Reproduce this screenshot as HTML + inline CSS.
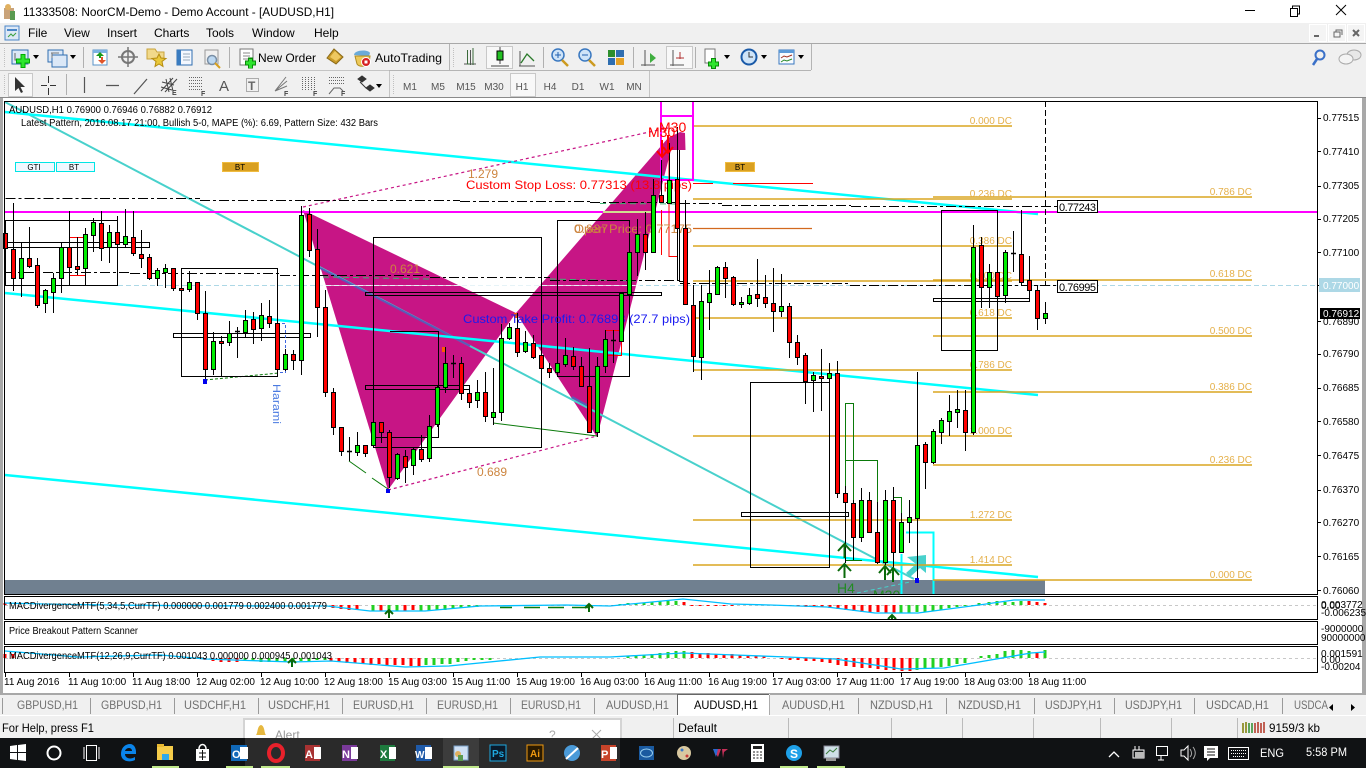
<!DOCTYPE html>
<html><head><meta charset="utf-8"><title>MT4</title>
<style>
html,body{margin:0;padding:0;background:#fff;width:1366px;height:768px;overflow:hidden}
svg{display:block;font-family:"Liberation Sans",sans-serif}
</style></head><body>
<svg width="1366" height="768" viewBox="0 0 1366 768" xmlns="http://www.w3.org/2000/svg">
<rect width="1366" height="768" fill="#fff"/>
<!-- title bar -->
<path d="M4 8h10v11H4z" fill="#c9a37a"/><circle cx="8" cy="7" r="3" fill="#e0b060"/><rect x="10" y="11" width="5" height="9" fill="#5a9a50"/>
<text x="23" y="16" font-size="12" fill="#000" textLength="311" lengthAdjust="spacingAndGlyphs">11333508: NoorCM-Demo - Demo Account - [AUDUSD,H1]</text>
<path d="M1245 10.5h10" stroke="#000"/><path d="M1290.5 8.5h7v8h-7zM1292.5 8.500v-2.500h7v8h-2" fill="none" stroke="#000"/><path d="M1336 5l10 10M1346 5l-10 10" stroke="#000"/>
<!-- menu -->
<rect y="23" width="1366" height="20" fill="#f0f0f0"/>
<rect x="5" y="26" width="14" height="14" fill="#dde8f6" stroke="#4a86c8"/><path d="M7 30h10" stroke="#4a86c8" stroke-width="2"/><path d="M8 37l3-3 2 2 3-3" stroke="#3aa040" fill="none"/>
<g font-size="12" fill="#000"><text x="28" y="37">File</text><text x="64" y="37">View</text><text x="107" y="37">Insert</text><text x="154" y="37">Charts</text><text x="206" y="37">Tools</text><text x="252" y="37">Window</text><text x="314" y="37">Help</text></g>
<g fill="#f4f4f4" stroke="#fff"><rect x="1309.500" y="24.500" width="17" height="17"/><rect x="1328.500" y="24.500" width="17" height="17"/><rect x="1347.500" y="24.500" width="17" height="17"/></g>
<path d="M1314 36h5" stroke="#666" stroke-width="2"/><path d="M1334 32h6v5h-6zM1336 32v-2h6v5" fill="none" stroke="#666"/><path d="M1353 30l6 6M1359 30l-6 6" stroke="#666" stroke-width="2"/>
<!-- toolbars -->
<rect y="43" width="1366" height="55" fill="#f0f0f0"/>
<rect y="43" width="1366" height="1" fill="#a8a8a8"/>
<path d="M0 70.500h811M449.500 44v26M811.500 44v26" stroke="#b4b4b4"/>
<path d="M0 70.500h389M389.500 71v26M649.500 71v26" stroke="#c4c4c4"/>
<g stroke="#c0c0c0" stroke-dasharray="1 1"><path d="M4.500 48v19M453.500 48v19M4.500 75v19M393.500 75v19"/></g>
<g stroke="#b0b0b0"><path d="M83.500 47v21M229.500 47v21M543.500 47v21M633.500 47v21M695.500 47v21M66.500 74v21"/></g>
<!-- row 1 icons -->
<rect x="12" y="50" width="16" height="14" fill="#dbe8f7" stroke="#2f6eb0"/><path d="M15 53v7h8" stroke="#666" fill="none"/><path d="M16 61h14M23 54v14" stroke="#0a0" stroke-width="5"/><path d="M17 61h12M23 55v12" stroke="#2ee52e" stroke-width="3"/>
<path d="M33 55l3 4 3-4z" fill="#000"/>
<rect x="48" y="50" width="15" height="12" fill="#dbe8f7" stroke="#2f6eb0"/><rect x="52" y="55" width="15" height="12" fill="#dbe8f7" stroke="#2f6eb0"/><path d="M52 53v5M51 53h8" stroke="#777"/>
<path d="M70 55l3 4 3-4z" fill="#000"/>
<rect x="93" y="50" width="14" height="15" fill="#fff" stroke="#5a93c8"/><path d="M93 50h14v3H93z" fill="#7ab2e2"/><path d="M100 52l-4 4h3v2h2v-2h3z" fill="#1a9a1a"/><path d="M102 64l4-4h-3v-3h-2v3h-3z" fill="#e0552a"/>
<circle cx="128" cy="57" r="6" fill="none" stroke="#777" stroke-width="2"/><path d="M128 47v20M118 57h20" stroke="#777" stroke-width="1.500"/>
<path d="M147 49h8l2 3h7v7h-17z" fill="#f1d98a" stroke="#c9a43c"/><path d="M159 54l2 4 5 .5-4 3 1 5-4-2.500-4 2.500 1-5-4-3 5-.5z" fill="#e9c83a" stroke="#b58c10"/>
<rect x="177" y="50" width="15" height="15" fill="#f4f8ff" stroke="#2f6eb0"/><rect x="177" y="50" width="4" height="15" fill="#3a7cc0"/><path d="M183 54h7M183 57h7M183 60h7" stroke="#9ab"/>
<rect x="205" y="50" width="13" height="14" fill="#f0f0f0" stroke="#999"/><circle cx="212" cy="60" r="4.500" fill="#bcd8f2" stroke="#7a8fa5" stroke-width="1.500"/><path d="M215 63l5 5" stroke="#d8a020" stroke-width="2"/>
<rect x="240" y="49" width="13" height="16" fill="#fff" stroke="#777"/><path d="M243 53h7M243 56h7M243 59h5" stroke="#888"/><path d="M245 63h11M250.500 57.500v11" stroke="#0a8a0a" stroke-width="5"/><path d="M246 63h9M250.500 59v9" stroke="#2ee52e" stroke-width="3"/>
<text x="258" y="62" font-size="12" fill="#000" textLength="58" lengthAdjust="spacingAndGlyphs">New Order</text>
<path d="M327 58l7-9 9 8-7 7z" fill="#c89a28" stroke="#8a6a18"/><path d="M330 57l5-6 6 6-5 4z" fill="#eec860"/>
<path d="M354 55c0-5 14-6 16-2l-1 3z" fill="#6aaad8"/><path d="M355 56l15 0-1 8c-4 3-10 3-12 0z" fill="#edc95a" stroke="#b08c20"/><circle cx="366" cy="62" r="4.500" fill="#d62020" stroke="#fff"/><rect x="364.500" y="60.500" width="3" height="3" fill="#fff"/>
<text x="375" y="62" font-size="12" fill="#000" textLength="67" lengthAdjust="spacingAndGlyphs">AutoTrading</text>
<path d="M470.500 50v15M464 64h12M482 0" stroke="#555" fill="none"/><path d="M467.500 50v14h3M473 48v17" stroke="#3a6a3a" fill="none"/>
<rect x="486.500" y="46.500" width="26" height="22" fill="#f8f8f8" stroke="#c8c8c8"/><path d="M500 47v17M491 66h18" stroke="#444"/><rect x="497" y="51" width="6" height="9" fill="#22c022" stroke="#000"/>
<path d="M519 66h16M520 51v15" stroke="#555" fill="none"/><path d="M521 63l6-9 7 7" stroke="#2a7a2a" stroke-width="1.300" fill="none"/>
<circle cx="558" cy="55" r="6" fill="#cfe4f8" stroke="#3a78c0" stroke-width="1.500"/><path d="M555 55h6M558 52v6" stroke="#2060b0"/><path d="M562 60l6 6" stroke="#cc9a20" stroke-width="2.500"/>
<circle cx="585" cy="55" r="6" fill="#cfe4f8" stroke="#3a78c0" stroke-width="1.500"/><path d="M582 55h6" stroke="#2060b0"/><path d="M589 60l6 6" stroke="#cc9a20" stroke-width="2.500"/>
<rect x="608" y="50" width="7" height="7" fill="#2d8e2d"/><rect x="616" y="50" width="8" height="7" fill="#2f6eb0"/><rect x="608" y="58" width="7" height="7" fill="#2f6eb0"/><rect x="616" y="58" width="8" height="7" fill="#e5a126"/>
<path d="M645 50v16M641 65h14" stroke="#555"/><path d="M650 53l6 5-6 5z" fill="#3fae3f"/>
<rect x="666.500" y="46.500" width="26" height="22" fill="#f8f8f8" stroke="#c8c8c8"/><path d="M673 50v16M670 65h14" stroke="#555"/><path d="M680 52v7M676 58h8" stroke="#b03030"/>
<rect x="705" y="49" width="10" height="14" fill="#fff" stroke="#777"/><path d="M708 64h11M713.500 58v11" stroke="#0a8a0a" stroke-width="5"/><path d="M709 64h9M713.500 59v9" stroke="#2ee52e" stroke-width="3"/>
<path d="M724 55l3 4 3-4z" fill="#000"/>
<circle cx="749" cy="57" r="7.500" fill="#cfe4f8" stroke="#1a5aa8" stroke-width="2"/><path d="M749 52v5h4" stroke="#333" fill="none"/><path d="M761 55l3 4 3-4z" fill="#000"/>
<rect x="779" y="50" width="15" height="14" fill="#f8fbff" stroke="#3a78c0"/><rect x="779" y="50" width="15" height="3" fill="#5a9ad8"/><path d="M781 58l3-2 3 1 5-2" stroke="#a03020" fill="none"/><path d="M781 62l3-2 3 1 5-2" stroke="#2a8a2a" fill="none"/><path d="M798 55l3 4 3-4z" fill="#000"/>
<circle cx="1320" cy="55" r="4.500" fill="none" stroke="#3a70c8" stroke-width="2"/><path d="M1317 59l-4 6" stroke="#3a70c8" stroke-width="2.500"/>
<ellipse cx="1354" cy="55" rx="7" ry="5" fill="#e8e8e8" stroke="#aaa"/><ellipse cx="1346" cy="59" rx="7" ry="5" fill="#f4f4f4" stroke="#aaa"/>
<!-- row 2 icons -->
<rect x="8.500" y="73.500" width="24" height="23" fill="#f8f8f8" stroke="#c8c8c8"/><path d="M15 77l0 14 3.500-3 2.500 5 2-1-2.500-5 4.500 0z" fill="#333"/>
<path d="M48.500 76v7M48.500 88v7M41 85.500h6M50 85.500h6" stroke="#333"/>
<path d="M84.500 77v16M106 85.500h13M134 94l13-15" stroke="#555" stroke-width="1.200"/>
<g stroke="#444" fill="none"><path d="M161 91l12-13M165 92l12-13M162 82l12 3M161 87l11 3M166 79l3 13M170 78l3 13"/></g><text x="172" y="95" font-size="7" font-weight="bold" fill="#444">E</text>
<g stroke="#666" stroke-dasharray="1 1"><path d="M189 77.500h14M189 80.500h14M189 83.500h14M189 86.500h14M189 89.500h14"/></g><text x="201" y="96" font-size="7" font-weight="bold" fill="#444">F</text>
<text x="219" y="91" font-size="15" fill="#555">A</text>
<rect x="246.500" y="78.500" width="12" height="13" fill="none" stroke="#666" stroke-dasharray="1 1"/><text x="248" y="90" font-size="12" font-weight="bold" fill="#666">T</text>
<path d="M275 91l11-14M275 91l12-10M275 91l12-5" stroke="#777"/><text x="284" y="96" font-size="7" font-weight="bold" fill="#444">F</text>
<g stroke="#666" stroke-dasharray="1 1"><path d="M302.500 77v14M305.500 77v14M308.500 77v14M311.500 77v14M314.500 77v14"/></g><text x="313" y="96" font-size="7" font-weight="bold" fill="#444">F</text>
<g stroke="#666" stroke-dasharray="1 1"><path d="M329 77.500h15M329 80.500h15M329 83.500h15"/></g><path d="M329 94l5-6h6l3 3" stroke="#666" fill="none"/><text x="341" y="96" font-size="7" font-weight="bold" fill="#444">F</text>
<path d="M358 79l4-3 4 3-4 3zM366 88l4-3 4 3-4 3zM360 82l6 6" fill="#333" stroke="#333"/><path d="M376 84l3 4 3-4z" fill="#000"/>
<rect x="510.500" y="73.500" width="25" height="23" fill="#f8f8f8" stroke="#c8c8c8"/>
<g font-size="10" fill="#555" text-anchor="middle"><text x="410" y="90">M1</text><text x="438" y="90">M5</text><text x="466" y="90">M15</text><text x="494" y="90">M30</text><text x="522" y="90">H1</text><text x="550" y="90">H4</text><text x="578" y="90">D1</text><text x="607" y="90">W1</text><text x="634" y="90">MN</text></g>
<rect y="97" width="1366" height="1" fill="#8a8a8a"/>
<!-- window edges -->
<rect y="98" width="3" height="595" fill="#a8a8a8"/><rect x="1362" y="98" width="4" height="595" fill="#a8a8a8"/>
<!-- chart -->
<rect x="5" y="580" width="1040" height="14.500" fill="#708090"/>
<path d="M303 210L388 490L516 313z" fill="#c71585"/>
<path d="M516 313L597 437L671 150L685.500 150L685 133L680 132L668 138z" fill="#c71585"/>
<!-- teal / cyan lines -->
<path d="M5 102L914 579" stroke="#48d1cc" stroke-width="2" fill="none"/>
<path d="M320 268L470 346" stroke="#5a5ab8" stroke-width="2"/><path d="M572 397L590 407" stroke="#5a5ab8" stroke-width="2"/>
<g stroke="#00ffff" stroke-width="2.500" fill="none"><path d="M5 112L1038 214"/><path d="M5 293L1038 395"/><path d="M5 475L1038 577"/></g>
<path d="M901.500 594V554M906 532.500h27.500V594" stroke="#00ffff" stroke-width="2" fill="none"/>
<path d="M907 557l19-2v18l-6-5-10 9-4-4 10-9z" fill="#48d1cc"/>
<!-- dashed pattern lines -->
<path d="M303 207L668 128" stroke="#c71585" stroke-dasharray="3 3" fill="none" stroke-width="1.200"/>
<path d="M388 490L597 436" stroke="#c71585" stroke-dasharray="3 3" fill="none" stroke-width="1.200"/>
<path d="M205 380L279 373" stroke="#0a7a0a" stroke-dasharray="3 2" fill="none"/>
<path d="M349 461L366 473M372 478L388 489" stroke="#0a7a0a" fill="none"/>
<path d="M493 423L597 436" stroke="#0a7a0a" fill="none"/>
<path d="M857 593L910 582" stroke="#48d1cc" stroke-dasharray="4 3" fill="none"/>
<!-- horizontal fib levels -->
<g stroke="#daa520" stroke-width="1.500"><path d="M693 126H1012M693 199H1012M693 246H1012M693 281H1012M693 318H1012M693 370H1012M693 436H1012M693 520H1012M693 565H1012"/><path d="M933 197H1252M933 280H1252M933 336H1252M933 392H1252M933 465H1252M933 580H1252"/></g>
<path d="M693 183.500H713M733 183.500H813" stroke="#f00"/>
<path d="M693 228.500H812" stroke="#d2691e" stroke-width="1.300"/>
<!-- magenta -->
<path d="M5 212H1317" stroke="#f0f" stroke-width="2"/>
<path d="M661 101V180H693V101M661 116H693" stroke="#f0f" stroke-width="2" fill="none"/>
<path d="M603 212H653" stroke="#cfe090" stroke-width="2"/>
<!-- dotted -->
<path d="M110 285.500H1317" stroke="#add8e6" stroke-dasharray="5 3"/>
<path d="M320 285.500H640" stroke="#fff" opacity=".7"/>
<path d="M323 277L430 279M550 279L640 281" stroke="#3cb371" stroke-dasharray="6 4"/>
<path d="M600 203.500L680 204" stroke="#3cb371" stroke-dasharray="6 4"/>
<path d="M5.500 198.500H100M100 198.500H200M200 200.500H320M320 200.500H460M460 201.500H590M590 202.500H680M680 203.500H722M722 205.500H851M851 206.500H1057" stroke="#000" stroke-dasharray="10 3 3 3" fill="none"/>
<path d="M5 272.500H130M130 273.500H280M280 275.500H430M430 277.500H550M550 280.500H680M680 283.500H850M850 285.500H1057" stroke="#000" stroke-dasharray="10 3 3 3" fill="none"/>
<path d="M1045.500 101V286" stroke="#000" stroke-dasharray="6 3"/>
<!-- boxes -->
<g fill="none" stroke="#000">
<rect x="5.500" y="220.500" width="112" height="65"/>
<rect x="5.500" y="242.500" width="144" height="5"/>
<rect x="181.500" y="268.500" width="96" height="108"/>
<rect x="173.500" y="333.500" width="137" height="4"/>
<rect x="373.500" y="237.500" width="168" height="210"/>
<path d="M390 331.500H438.500V437.500H373.500"/>
<rect x="365.500" y="292.500" width="296" height="3"/>
<rect x="365.500" y="385.500" width="104" height="4"/>
<rect x="557.500" y="220.500" width="72" height="156"/>
<rect x="941.500" y="210.500" width="56" height="140"/>
<rect x="933.500" y="298.500" width="96" height="3"/>
<rect x="750.500" y="382.500" width="79" height="185"/>
<rect x="741.500" y="512.500" width="107" height="4"/>
<path d="M679.500 150V281.500H685"/>
</g>
<g fill="none" stroke="#0a7a0a"><rect x="845.500" y="403.500" width="8" height="157"/><path d="M845.500 460.500H877.500V502M862 560.500H845.500M893.500 497.500H901.500V513"/></g>
<g fill="none" stroke="#f00"><path d="M69 237.500H85.500V275.500H69M605 330.500H621.500V355.500H605M669 155.500V256.500H677M661.500 210V255"/></g>
<path d="M277 323.500H285.500V372.500H277" stroke="#4169e1" stroke-dasharray="3 2" fill="none"/>
<path d="M446 347h-4v5h4zM518 313h-4v5h4z" fill="#ff5a00"/>
<!-- text objects under candles -->
<g font-size="10" fill="#e5b04a" text-anchor="end">
<text x="1012" y="124">0.000 DC</text><text x="1012" y="197">0.236 DC</text><text x="1012" y="244">0.386 DC</text><text x="1012" y="279">0.500 DC</text><text x="1012" y="316">0.618 DC</text><text x="1012" y="368">0.786 DC</text><text x="1012" y="434">1.000 DC</text><text x="1012" y="518">1.272 DC</text><text x="1012" y="563">1.414 DC</text>
<text x="1252" y="195">0.786 DC</text><text x="1252" y="277">0.618 DC</text><text x="1252" y="334">0.500 DC</text><text x="1252" y="390">0.386 DC</text><text x="1252" y="463">0.236 DC</text><text x="1252" y="578">0.000 DC</text></g>
<text x="466" y="189" font-size="12" fill="#f00" textLength="226" lengthAdjust="spacingAndGlyphs">Custom Stop Loss: 0.77313 (13.8 pips)</text>
<text x="463" y="323" font-size="12" fill="#1a1af0" textLength="227" lengthAdjust="spacingAndGlyphs">Custom Take Profit: 0.76893 (27.7 pips)</text>
<text x="574" y="233" font-size="12" fill="#cd853f" textLength="118" lengthAdjust="spacingAndGlyphs">Open Price: 0.77175</text>
<text x="574" y="233" font-size="12" fill="#cd853f" textLength="34">0.887</text>
<g font-size="12" fill="#cd853f"><text x="468" y="178">1.279</text><text x="390" y="273">0.621</text><text x="477" y="476">0.689</text></g>
<text x="0" y="0" font-size="11" fill="#4a7ae0" transform="translate(273 384) rotate(90)" textLength="40" lengthAdjust="spacingAndGlyphs">Harami</text>
<!-- wicks -->
<path stroke="#000" fill="none" d="M5.500 222V252M13.500 203V291M21.500 243V297M29.500 227V268M37.500 258V308M45.500 289V313M53.500 273V313M61.500 243V293M69.500 211V285M77.500 237V275M85.500 228V285M93.500 218V252M101.500 211V261M109.500 225V263M117.500 216V253M125.500 209V247M133.500 211V256M141.500 230V268M149.500 254V280M157.500 268V286M165.500 264V288M173.500 268V291M181.500 285V293M189.500 271V292M197.500 282V320M205.500 291V382M213.500 332V375M221.500 336V376M229.500 321V346M237.500 327V358M245.500 310V337M253.500 312V344M261.500 303V341M269.500 300V328M277.500 323V373M285.500 349V371M293.500 350V370M301.500 206V375M309.500 208V257M317.500 229V337M325.500 290V397M333.500 388V435M341.500 427V456M349.500 437V461M357.500 432V456M365.500 445V457M373.500 420V448M381.500 422V443M389.500 430V488M397.500 453V480M405.500 450V483M413.500 448V475M421.500 435V462M429.500 415V462M437.500 385V427M445.500 347V393M453.500 355V378M461.500 357V400M469.500 385V408M477.500 380V408M485.500 372V422M493.500 368V425M501.500 324V421M509.500 323V340M517.500 313V357M525.500 331V353M533.500 335V359M541.500 348V370M549.500 363V378M557.500 363V375M565.500 338V367M573.500 347V370M581.500 357V387M589.500 348V432M597.500 357V437M605.500 330V373M613.500 330V363M621.500 293V342M629.500 250V295M637.500 219V276M645.500 212V270M653.500 179V253M661.500 160V203M669.500 143V203M677.500 127V281M685.500 200V304M693.500 285V372M701.500 285V380M709.500 270V330M717.500 266V295M725.500 262V298M733.500 276V306M741.500 297V308M749.500 288V305M757.500 259V307M765.500 275V308M773.500 268V332M781.500 274V317M789.500 303V358M797.500 335V365M805.500 353V404M813.500 372V412M821.500 349V411M829.500 363V410M837.500 361V498M845.500 486V563M853.500 500V560M861.500 488V542M869.500 492V532M877.500 502V564M885.500 490V565M893.500 487V568M901.500 513V553M909.500 500V543M917.500 372V578M925.500 442V489M933.500 429V464M941.500 418V444M949.500 395V436M957.500 390V428M965.500 390V451M973.500 225V435M981.500 237V308M989.500 264V308M997.500 210V315M1005.500 250V303M1013.500 231V272M1021.500 210V285M1029.500 256V302M1037.500 285V330M1045.500 302V324"/>
<path stroke="#000" stroke-width="1.500" fill="none" d="M235 331.500h5M347 451.500h5M451 363.500h5M611 340.500h5M1011 253.500h5"/>
<!-- red bodies -->
<path fill="#f00" stroke="#000" d="M3.500 233.500h4v15h-4zM11.500 249.500h4v29h-4zM27.500 258.500h4v8h-4zM35.500 265.500h4v40h-4zM67.500 247.500h4v20h-4zM75.500 266.500h4v3h-4zM99.500 223.500h4v25h-4zM115.500 232.500h4v12h-4zM131.500 237.500h4v16h-4zM139.500 254.500h4v4h-4zM147.500 257.500h4v21h-4zM171.500 268.500h4v20h-4zM179.500 288.500h4v2h-4zM195.500 282.500h4v31h-4zM203.500 313.500h4v56h-4zM219.500 341.500h4v2h-4zM251.500 319.500h4v10h-4zM267.500 316.500h4v7h-4zM275.500 323.500h4v46h-4zM291.500 354.500h4v6h-4zM307.500 214.500h4v36h-4zM315.500 249.500h4v58h-4zM323.500 307.500h4v85h-4zM331.500 392.500h4v35h-4zM339.500 427.500h4v24h-4zM363.500 445.500h4v8h-4zM379.500 422.500h4v10h-4zM387.500 432.500h4v45h-4zM403.500 456.500h4v11h-4zM419.500 449.500h4v10h-4zM459.500 363.500h4v30h-4zM467.500 393.500h4v9h-4zM483.500 392.500h4v24h-4zM515.500 328.500h4v24h-4zM531.500 343.500h4v14h-4zM539.500 355.500h4v13h-4zM547.500 368.500h4v4h-4zM571.500 356.500h4v10h-4zM579.500 366.500h4v20h-4zM587.500 386.500h4v46h-4zM643.500 234.500h4v18h-4zM659.500 195.500h4v7h-4zM675.500 179.500h4v49h-4zM683.500 228.500h4v76h-4zM691.500 305.500h4v51h-4zM723.500 267.500h4v11h-4zM731.500 277.500h4v27h-4zM755.500 294.500h4v4h-4zM763.500 297.500h4v6h-4zM771.500 303.500h4v8h-4zM787.500 306.500h4v36h-4zM795.500 342.500h4v15h-4zM803.500 355.500h4v26h-4zM819.500 376.500h4v2h-4zM835.500 373.500h4v120h-4zM843.500 493.500h4v9h-4zM851.500 503.500h4v34h-4zM867.500 500.500h4v32h-4zM875.500 532.500h4v30h-4zM891.500 500.500h4v52h-4zM923.500 444.500h4v18h-4zM963.500 410.500h4v22h-4zM979.500 245.500h4v42h-4zM995.500 272.500h4v24h-4zM1019.500 254.500h4v28h-4zM1027.500 280.500h4v10h-4zM1035.500 290.500h4v28h-4z"/>
<!-- green bodies -->
<path fill="#00ee00" stroke="#000" d="M19.500 258.500h4v20h-4zM43.500 290.500h4v13h-4zM51.500 278.500h4v14h-4zM59.500 247.500h4v31h-4zM83.500 234.500h4v34h-4zM91.500 222.500h4v13h-4zM107.500 232.500h4v15h-4zM123.500 236.500h4v8h-4zM155.500 270.500h4v8h-4zM163.500 268.500h4v4h-4zM187.500 282.500h4v7h-4zM211.500 341.500h4v28h-4zM227.500 333.500h4v9h-4zM243.500 320.500h4v12h-4zM259.500 315.500h4v13h-4zM283.500 354.500h4v15h-4zM299.500 215.500h4v145h-4zM355.500 445.500h4v7h-4zM371.500 422.500h4v23h-4zM395.500 454.500h4v24h-4zM411.500 449.500h4v16h-4zM427.500 426.500h4v32h-4zM435.500 387.500h4v37h-4zM443.500 363.500h4v24h-4zM475.500 392.500h4v8h-4zM491.500 412.500h4v5h-4zM499.500 338.500h4v74h-4zM507.500 327.500h4v11h-4zM523.500 342.500h4v9h-4zM555.500 363.500h4v9h-4zM563.500 355.500h4v9h-4zM595.500 366.500h4v66h-4zM603.500 339.500h4v27h-4zM619.500 293.500h4v48h-4zM627.500 252.500h4v42h-4zM635.500 234.500h4v18h-4zM651.500 195.500h4v57h-4zM667.500 180.500h4v23h-4zM699.500 301.500h4v56h-4zM707.500 293.500h4v9h-4zM715.500 267.500h4v27h-4zM739.500 302.500h4v2h-4zM747.500 295.500h4v8h-4zM779.500 306.500h4v5h-4zM811.500 375.500h4v5h-4zM827.500 373.500h4v5h-4zM859.500 500.500h4v37h-4zM883.500 500.500h4v62h-4zM899.500 522.500h4v30h-4zM907.500 517.500h4v5h-4zM915.500 445.500h4v73h-4zM931.500 431.500h4v31h-4zM939.500 420.500h4v12h-4zM947.500 411.500h4v10h-4zM955.500 409.500h4v3h-4zM971.500 247.500h4v185h-4zM987.500 272.500h4v15h-4zM1003.500 252.500h4v43h-4zM1043.500 313.500h4v5h-4z"/>
<!-- arrows and marks over candles -->
<g stroke="#0a6a0a" stroke-width="2" fill="none"><path d="M844.500 558V544M838 551l6.500-7 6.500 7M844.500 578V564M838 571l6.500-7 6.500 7M885 580V566M879 573l6-7 6 7M893 582V568M887 575l6-7 6 7"/></g>
<g stroke="#f00" stroke-width="2" fill="none"><path d="M662 140V156M657 151l5 6 5-6M668 135V152M663 147l5 6 5-6"/></g>
<g fill="#f00" font-size="14"><text x="648" y="137">M30</text><text x="659" y="132">M30</text></g>
<text x="837" y="593" font-size="14" fill="#228b22">H4</text>
<svg x="0" y="0" width="1366" height="595"><text x="873" y="600" font-size="14" fill="#228b22">M30</text></svg>
<path d="M203 379h4v5h-4zM386 489h4v4h-4zM915 578h4v5h-4z" fill="#0000ee"/>
<!-- buttons -->
<g font-size="8" text-anchor="middle"><rect x="15.500" y="162.500" width="39" height="9" fill="#f0f8ff" stroke="#00e5e5"/><rect x="56.500" y="162.500" width="38" height="9" fill="#f0f8ff" stroke="#00e5e5"/><text x="34" y="170" fill="#000">GTI</text><text x="74" y="170" fill="#000">BT</text>
<rect x="222.500" y="162.500" width="36" height="9" fill="#d9a021" stroke="#f0bc40"/><text x="240" y="170" fill="#000">BT</text>
<rect x="725.500" y="162.500" width="29" height="9" fill="#d9a021" stroke="#f0bc40"/><text x="740" y="170" fill="#000">BT</text></g>
<!-- header text -->
<text x="9" y="113" font-size="10" fill="#000" textLength="203" lengthAdjust="spacingAndGlyphs">AUDUSD,H1  0.76900 0.76946 0.76882 0.76912</text>
<text x="21" y="126" font-size="10" fill="#000" textLength="357" lengthAdjust="spacingAndGlyphs">Latest Pattern, 2016.08.17 21:00, Bullish 5-0, MAPE (%): 6.69, Pattern Size: 432 Bars</text>
<!-- subwindow contents -->
<rect x="5" y="596" width="1312" height="76" fill="#fff"/>
<path d="M5 605.500H1317M5 658.500H1317" stroke="#c8c8c8" stroke-dasharray="3 3"/>
<path stroke="#f00" stroke-width="3" fill="none" d="M5 605V603M333 605V608M341 605V609M349 605V610M357 605V610M381 605V611M405 605V611M413 605V610M532 605V606M613 605V606M684 605V602M692 605V606M700 605V606M708 605V606M716 605V606M724 605V606M732 605V606M790 605V606M798 605V606M806 605V607M814 605V607M822 605V607M830 605V608M838 605V609M846 605V610M854 605V611M862 605V612M870 605V612M878 605V612M886 605V613M894 605V613M1029 605V601M1037 605V602M1045 605V603M5 658V654M13 658V654M205 658V660M213 658V661M221 658V662M229 658V662M237 658V662M331 658V661M339 658V662M347 658V663M355 658V663M363 658V664M371 658V665M379 658V664M387 658V665M395 658V665M403 658V665M411 658V666M419 658V666M692 658V652M700 658V653M708 658V653M716 658V654M724 658V654M732 658V654M740 658V655M748 658V655M756 658V656M764 658V656M782 658V659M790 658V660M798 658V660M806 658V661M814 658V661M822 658V662M830 658V663M838 658V665M846 658V666M854 658V667M862 658V668M870 658V668M878 658V669M886 658V670M894 658V670M902 658V671M910 658V671M1037 658V652"/>
<path stroke="#22d022" stroke-width="3" fill="none" d="M373 605V611M389 605V611M397 605V611M421 605V611M429 605V611M437 605V610M445 605V610M453 605V609M461 605V608M469 605V607M477 605V607M620 605V604M628 605V603M636 605V603M644 605V603M652 605V602M660 605V601M668 605V601M676 605V601M901 605V613M909 605V613M917 605V612M925 605V612M933 605V611M941 605V610M949 605V608M957 605V607M965 605V606M973 605V606M979 605V603M989 605V602M997 605V601M1005 605V602M1013 605V602M1021 605V601M245 658V661M253 658V661M261 658V662M269 658V662M277 658V661M285 658V662M293 658V662M301 658V661M309 658V661M317 658V660M325 658V660M426 658V665M434 658V665M442 658V664M450 658V664M458 658V662M466 658V661M474 658V660M482 658V660M490 658V660M628 658V656M636 658V656M644 658V655M652 658V654M660 658V653M668 658V652M676 658V651M684 658V651M917 658V670M925 658V669M933 658V668M941 658V667M949 658V666M957 658V664M965 658V663M981 658V656M989 658V655M997 658V654M1005 658V651M1013 658V650M1021 658V650M1029 658V651M1045 658V650"/>
<path stroke="#0a7a0a" stroke-width="1.500" fill="none" d="M500 607.500h12M524 607.500h16M548 607.500h16M572 607.500h16"/>
<path stroke="#00bfff" stroke-width="1.300" fill="none" d="M5 603C100 606 240 606 327 606L370 611L425 611L480 606L566 605L610 606L683 599L731 604L770 605L827 607L875 613L918 613L979 605L1014 600L1045 600"/>
<path stroke="#00bfff" stroke-width="1.300" fill="none" d="M5 651L78 657L161 655L205 659L292 662L331 661L405 667L449 666L540 657L610 657L683 653L735 655L787 657L835 659L901 669L944 668L1031 653L1045 652"/>
<g stroke="#0a6a0a" stroke-width="2" fill="none"><path d="M389 618V610M385 614l4-4 4 4M589 612V604M585 608l4-4 4 4M292 667V659M288 663l4-4 4 4M892 619V615M888 619l4-4 4 4"/></g>
<g font-size="10" fill="#000"><text x="9" y="609" textLength="318" lengthAdjust="spacingAndGlyphs">MACDivergenceMTF(5,34,5,CurrTF) 0.000000 0.001779 0.002400 0.001779</text>
<text x="9" y="634" textLength="129" lengthAdjust="spacingAndGlyphs">Price Breakout Pattern Scanner</text>
<text x="9" y="659" textLength="323" lengthAdjust="spacingAndGlyphs">MACDivergenceMTF(12,26,9,CurrTF) 0.001043 0.000000 0.000945 0.001043</text></g>
<!-- frames -->
<path fill="none" stroke="#000" d="M4.500 101.500H1317.500V594.500H4.500zM4.500 596.500H1317.500V619.500H4.500zM4.500 621.500H1317.500V644.500H4.500zM4.500 646.500H1317.500V672.500H4.500z"/>
<!-- price scale -->
<path stroke="#000" d="M1318 118.500h3M1318 151.500h3M1318 186.500h3M1318 219.500h3M1318 252.500h3M1318 285.500h3M1318 321.500h3M1318 354.500h3M1318 388.500h3M1318 421.500h3M1318 455.500h3M1318 490.500h3M1318 522.500h3M1318 556.500h3M1318 590.500h3"/>
<g font-size="10" fill="#000"><text x="1323" y="121">0.77515</text><text x="1323" y="155">0.77410</text><text x="1323" y="189">0.77305</text><text x="1323" y="222">0.77205</text><text x="1323" y="256">0.77100</text><text x="1323" y="325">0.76890</text><text x="1323" y="357">0.76790</text><text x="1323" y="391">0.76685</text><text x="1323" y="425">0.76580</text><text x="1323" y="459">0.76475</text><text x="1323" y="493">0.76370</text><text x="1323" y="526">0.76270</text><text x="1323" y="560">0.76165</text><text x="1323" y="594">0.76060</text>
<text x="1321" y="608">0.003772</text><text x="1321" y="609">0.00</text><text x="1321" y="616">-0.006235</text><text x="1321" y="632">-9000000</text><text x="1321" y="641">90000000</text><text x="1321" y="657">0.001591</text><text x="1321" y="663">0.00</text><text x="1321" y="670">-0.00204</text></g>
<rect x="1319" y="278" width="41" height="14" fill="#add8e6"/><text x="1323" y="289" font-size="10" fill="#fff">0.77000</text>
<rect x="1320" y="308" width="40" height="11" fill="#000"/><text x="1323" y="317" font-size="10" fill="#fff">0.76912</text>
<rect x="1057.500" y="200.500" width="40" height="12" fill="#fff" stroke="#000"/><text x="1059" y="211" font-size="11" fill="#000" textLength="37">0.77243</text>
<rect x="1057.500" y="280.500" width="40" height="12" fill="#fff" stroke="#000"/><text x="1059" y="291" font-size="11" fill="#000" textLength="37">0.76995</text>
<!-- time scale -->
<path stroke="#000" d="M5.500 673v4M69.500 673v4M133.500 673v4M197.500 673v4M261.500 673v4M325.500 673v4M389.500 673v4M453.500 673v4M517.500 673v4M581.500 673v4M645.500 673v4M709.500 673v4M773.500 673v4M837.500 673v4M901.500 673v4M965.500 673v4M1029.500 673v4"/>
<g font-size="10" fill="#000"><text x="4" y="685">11 Aug 2016</text><text x="68" y="685">11 Aug 10:00</text><text x="132" y="685">11 Aug 18:00</text><text x="196" y="685">12 Aug 02:00</text><text x="260" y="685">12 Aug 10:00</text><text x="324" y="685">12 Aug 18:00</text><text x="388" y="685">15 Aug 03:00</text><text x="452" y="685">15 Aug 11:00</text><text x="516" y="685">15 Aug 19:00</text><text x="580" y="685">16 Aug 03:00</text><text x="644" y="685">16 Aug 11:00</text><text x="708" y="685">16 Aug 19:00</text><text x="772" y="685">17 Aug 03:00</text><text x="836" y="685">17 Aug 11:00</text><text x="900" y="685">17 Aug 19:00</text><text x="964" y="685">18 Aug 03:00</text><text x="1028" y="685">18 Aug 11:00</text></g>
<!-- tabs -->
<rect y="693" width="1366" height="22" fill="#f0f0f0"/><rect y="693" width="1366" height="1" fill="#a8a8a8"/>
<path d="M0 694h677v1H0zM770 694h596v1H770z" fill="#a8a8a8"/>
<path d="M677.500 695V715M769 695V715M677 694.500H769" stroke="#666" fill="none"/><rect x="678" y="695" width="91" height="20" fill="#fff"/>
<path stroke="#9a9a9a" d="M90.500 698v16M174.500 698v16M258.500 698v16M342.500 698v16M426.500 698v16M510.500 698v16M594.500 698v16M858.500 698v16M946.500 698v16M1034.500 698v16M1114.500 698v16M1194.500 698v16M1282.500 698v16M2.500 698v16"/>
<g font-size="12" fill="#707070"><text x="17" y="709" textLength="61" lengthAdjust="spacingAndGlyphs">GBPUSD,H1</text><text x="101" y="709" textLength="61" lengthAdjust="spacingAndGlyphs">GBPUSD,H1</text><text x="184" y="709" textLength="62" lengthAdjust="spacingAndGlyphs">USDCHF,H1</text><text x="268" y="709" textLength="62" lengthAdjust="spacingAndGlyphs">USDCHF,H1</text><text x="353" y="709" textLength="61" lengthAdjust="spacingAndGlyphs">EURUSD,H1</text><text x="437" y="709" textLength="61" lengthAdjust="spacingAndGlyphs">EURUSD,H1</text><text x="521" y="709" textLength="60" lengthAdjust="spacingAndGlyphs">EURUSD,H1</text><text x="606" y="709" textLength="63" lengthAdjust="spacingAndGlyphs">AUDUSD,H1</text><text x="782" y="709" textLength="63" lengthAdjust="spacingAndGlyphs">AUDUSD,H1</text><text x="870" y="709" textLength="63" lengthAdjust="spacingAndGlyphs">NZDUSD,H1</text><text x="958" y="709" textLength="63" lengthAdjust="spacingAndGlyphs">NZDUSD,H1</text><text x="1045" y="709" textLength="57" lengthAdjust="spacingAndGlyphs">USDJPY,H1</text><text x="1125" y="709" textLength="57" lengthAdjust="spacingAndGlyphs">USDJPY,H1</text><text x="1206" y="709" textLength="63" lengthAdjust="spacingAndGlyphs">USDCAD,H1</text><text x="1294" y="709" textLength="34" lengthAdjust="spacingAndGlyphs">USDCA</text></g>
<text x="694" y="709" font-size="12" fill="#000" textLength="64" lengthAdjust="spacingAndGlyphs">AUDUSD,H1</text>
<path d="M1333 704l-4 3.500 4 3.500zM1351 704l4 3.500-4 3.500z" fill="#000"/>
<!-- status -->
<rect y="715" width="1366" height="23" fill="#f0f0f0"/><rect y="715" width="1366" height="1" fill="#fff"/>
<text x="2" y="732" font-size="12" fill="#000" textLength="92" lengthAdjust="spacingAndGlyphs">For Help, press F1</text>
<text x="678" y="732" font-size="12" fill="#000" textLength="39" lengthAdjust="spacingAndGlyphs">Default</text>
<path stroke="#bbb" d="M673.500 718v20M788.500 718v20M891.500 718v20M962.500 718v20M1033.500 718v20M1100.500 718v20M1171.500 718v20M1237.500 718v20"/>
<path stroke="#7a7a00" stroke-width="1.500" d="M1243 733v-10M1246 733v-11"/><path stroke="#2a8a2a" stroke-width="1.500" d="M1249 733v-10M1252 733v-10"/><path stroke="#b03020" stroke-width="1.500" d="M1255 733v-10M1258 733v-11M1261 733v-10M1264 733v-11"/>
<text x="1269" y="732" font-size="12" fill="#000" textLength="51" lengthAdjust="spacingAndGlyphs">9159/3 kb</text>
<!-- alert -->
<rect x="243" y="718" width="379" height="22" fill="#aaa" opacity=".4"/>
<rect x="245" y="720" width="375" height="18" fill="#fff"/>
<path d="M256 735c2-2 1-9 5-10 4 1 3 8 5 10z" fill="#e6b840"/>
<text x="275" y="739" font-size="12" fill="#999">Alert</text>
<text x="549" y="739" font-size="12" fill="#aaa">?</text>
<path d="M592 730l9 9M601 730l-9 9" stroke="#aaa"/>
<!-- taskbar -->
<rect y="738" width="1366" height="30" fill="#101214"/>
<rect x="245" y="738" width="375" height="30" fill="#2a2a2a"/>
<rect x="443" y="738" width="36" height="30" fill="#3c3c3c"/>
<g fill="#bfe88a"><rect x="152" y="766" width="27" height="2"/><rect x="226" y="766" width="27" height="2"/><rect x="261" y="766" width="29" height="2"/><rect x="443" y="766" width="36" height="2"/><rect x="780" y="766" width="28" height="2"/><rect x="817" y="766" width="28" height="2"/></g>
<path d="M10 746l7-1v7h-7zM18 745l8-1v8h-8zM10 753h7v7l-7-1zM18 753h8v8l-8-1z" fill="#fff"/>
<circle cx="54" cy="753" r="6.500" fill="none" stroke="#fff" stroke-width="2"/>
<path d="M84 747v12M99 747v12" stroke="#fff"/><rect x="86.500" y="745.500" width="10" height="15" fill="none" stroke="#fff"/>
<path d="M121 754c0-6 4-10 9-10 4 0 6 4 6 8v2h-11c0 4 5 6 10 3v3c-6 3-14 1-14-6zM125 751h7c0-4-6-4-7 0z" fill="#0a84ea"/>
<rect x="157" y="746" width="16" height="14" fill="#f5cc4a"/><rect x="157" y="744" width="7" height="3" fill="#e8b830"/><rect x="162" y="754" width="7" height="6" fill="#2ea8e8"/>
<rect x="196" y="749" width="13" height="12" fill="#fff"/><path d="M199 749c0-6 7-6 7 0" fill="none" stroke="#fff" stroke-width="1.500"/><path d="M199 753h7M199 757h7M202.500 750v10" stroke="#111"/>
<rect x="231" y="745" width="16" height="16" fill="#1068b8"/><rect x="240" y="747" width="8" height="12" fill="#fff"/><text x="232" y="758" font-size="11" font-weight="bold" fill="#fff">O</text>
<ellipse cx="276" cy="753" rx="7" ry="8" fill="none" stroke="#e8212b" stroke-width="4"/>
<rect x="305" y="745" width="15" height="16" fill="#a83232"/><rect x="314" y="747" width="7" height="12" fill="#fff"/><text x="305" y="758" font-size="11" font-weight="bold" fill="#fff">A</text>
<rect x="342" y="745" width="15" height="16" fill="#7a3a9a"/><rect x="351" y="747" width="7" height="12" fill="#fff"/><text x="342" y="758" font-size="11" font-weight="bold" fill="#fff">N</text>
<rect x="380" y="745" width="15" height="16" fill="#1e7a3e"/><rect x="389" y="747" width="7" height="12" fill="#fff"/><text x="380" y="758" font-size="11" font-weight="bold" fill="#fff">X</text>
<rect x="416" y="745" width="15" height="16" fill="#1f5aa8"/><rect x="425" y="747" width="7" height="12" fill="#fff"/><text x="415" y="758" font-size="10" font-weight="bold" fill="#fff">W</text>
<rect x="454" y="746" width="14" height="14" fill="#cfe0f4" stroke="#7aa0c8"/><circle cx="458" cy="754" r="3" fill="#e0b060"/><rect x="458" y="755" width="5" height="6" fill="#5a9a50"/>
<rect x="490" y="745" width="16" height="16" fill="#0a1a2a" stroke="#1ea8e0"/><text x="492" y="757" font-size="10" font-weight="bold" fill="#1ea8e0">Ps</text>
<rect x="527" y="745" width="16" height="16" fill="#2a1a00" stroke="#f09a10"/><text x="530" y="757" font-size="10" font-weight="bold" fill="#f09a10">Ai</text>
<circle cx="572" cy="753" r="8" fill="#4a9ad8"/><path d="M566 759l12-11" stroke="#fff" stroke-width="2"/>
<rect x="601" y="745" width="15" height="16" fill="#c8442a"/><rect x="610" y="747" width="7" height="12" fill="#fff"/><text x="601" y="758" font-size="11" font-weight="bold" fill="#fff">P</text>
<rect x="639" y="746" width="15" height="14" fill="#1a5aa0"/><ellipse cx="646.500" cy="753" rx="6" ry="4" fill="none" stroke="#9ad0f0"/>
<circle cx="684" cy="753" r="7" fill="#d8c8a0"/><circle cx="682" cy="750" r="1.500" fill="#3a78c8"/><circle cx="687" cy="756" r="1.500" fill="#c83a3a"/>
<path d="M713 749h8l-3 8zM722 749h6l-4 3-1 6z" fill="#c8305a"/><path d="M713 749h5l-2 8z" fill="#2a6ad0"/>
<rect x="751" y="744" width="13" height="18" fill="#fff"/><path d="M753 746h9v3h-9z" fill="#222"/><path d="M753 752h2M756.500 752h2M760 752h2M753 755h2M756.500 755h2M760 755h2M753 758h2M756.500 758h2M760 758h2" stroke="#222"/>
<circle cx="794" cy="753" r="8" fill="#1ea0e8"/><text x="790" y="758" font-size="12" font-weight="bold" fill="#fff">S</text>
<rect x="824" y="746" width="15" height="12" fill="#cfe0e8" stroke="#889"/><path d="M826 754l4-4 3 2 4-4" stroke="#3a7a3a" fill="none"/><rect x="826" y="758" width="10" height="3" fill="#999"/>
<path d="M1109 757l5-5 5 5" stroke="#fff" fill="none" stroke-width="1.300"/>
<rect x="1133" y="750" width="11" height="8" fill="none" stroke="#fff"/><path d="M1135 746v4M1139 746v4" stroke="#fff"/><rect x="1135" y="752" width="9" height="6" fill="#bbb"/>
<rect x="1156.500" y="746.500" width="11" height="9" fill="none" stroke="#fff"/><path d="M1158 760h6M1161 756v4" stroke="#fff"/>
<path d="M1181 750h3l4-4v14l-4-4h-3z" fill="none" stroke="#fff"/><path d="M1190 749c2 3 2 6 0 8M1193 747c3 4 3 8 0 12" stroke="#aaa" fill="none"/>
<path d="M1204 746h14v12h-8l-3 3v-3h-3z" fill="#fff"/><path d="M1207 749h8M1207 752h8M1207 755h8" stroke="#111"/>
<rect x="1228.500" y="747.500" width="20" height="12" fill="none" stroke="#fff"/><path d="M1231 750.500h15M1231 753.500h15M1233 756.500h11" stroke="#fff" stroke-dasharray="1 1"/>
<text x="1260" y="757" font-size="12" fill="#fff" textLength="24" lengthAdjust="spacingAndGlyphs">ENG</text>
<text x="1306" y="756" font-size="12" fill="#fff" textLength="41" lengthAdjust="spacingAndGlyphs">5:58 PM</text>
</svg>
</body></html>
